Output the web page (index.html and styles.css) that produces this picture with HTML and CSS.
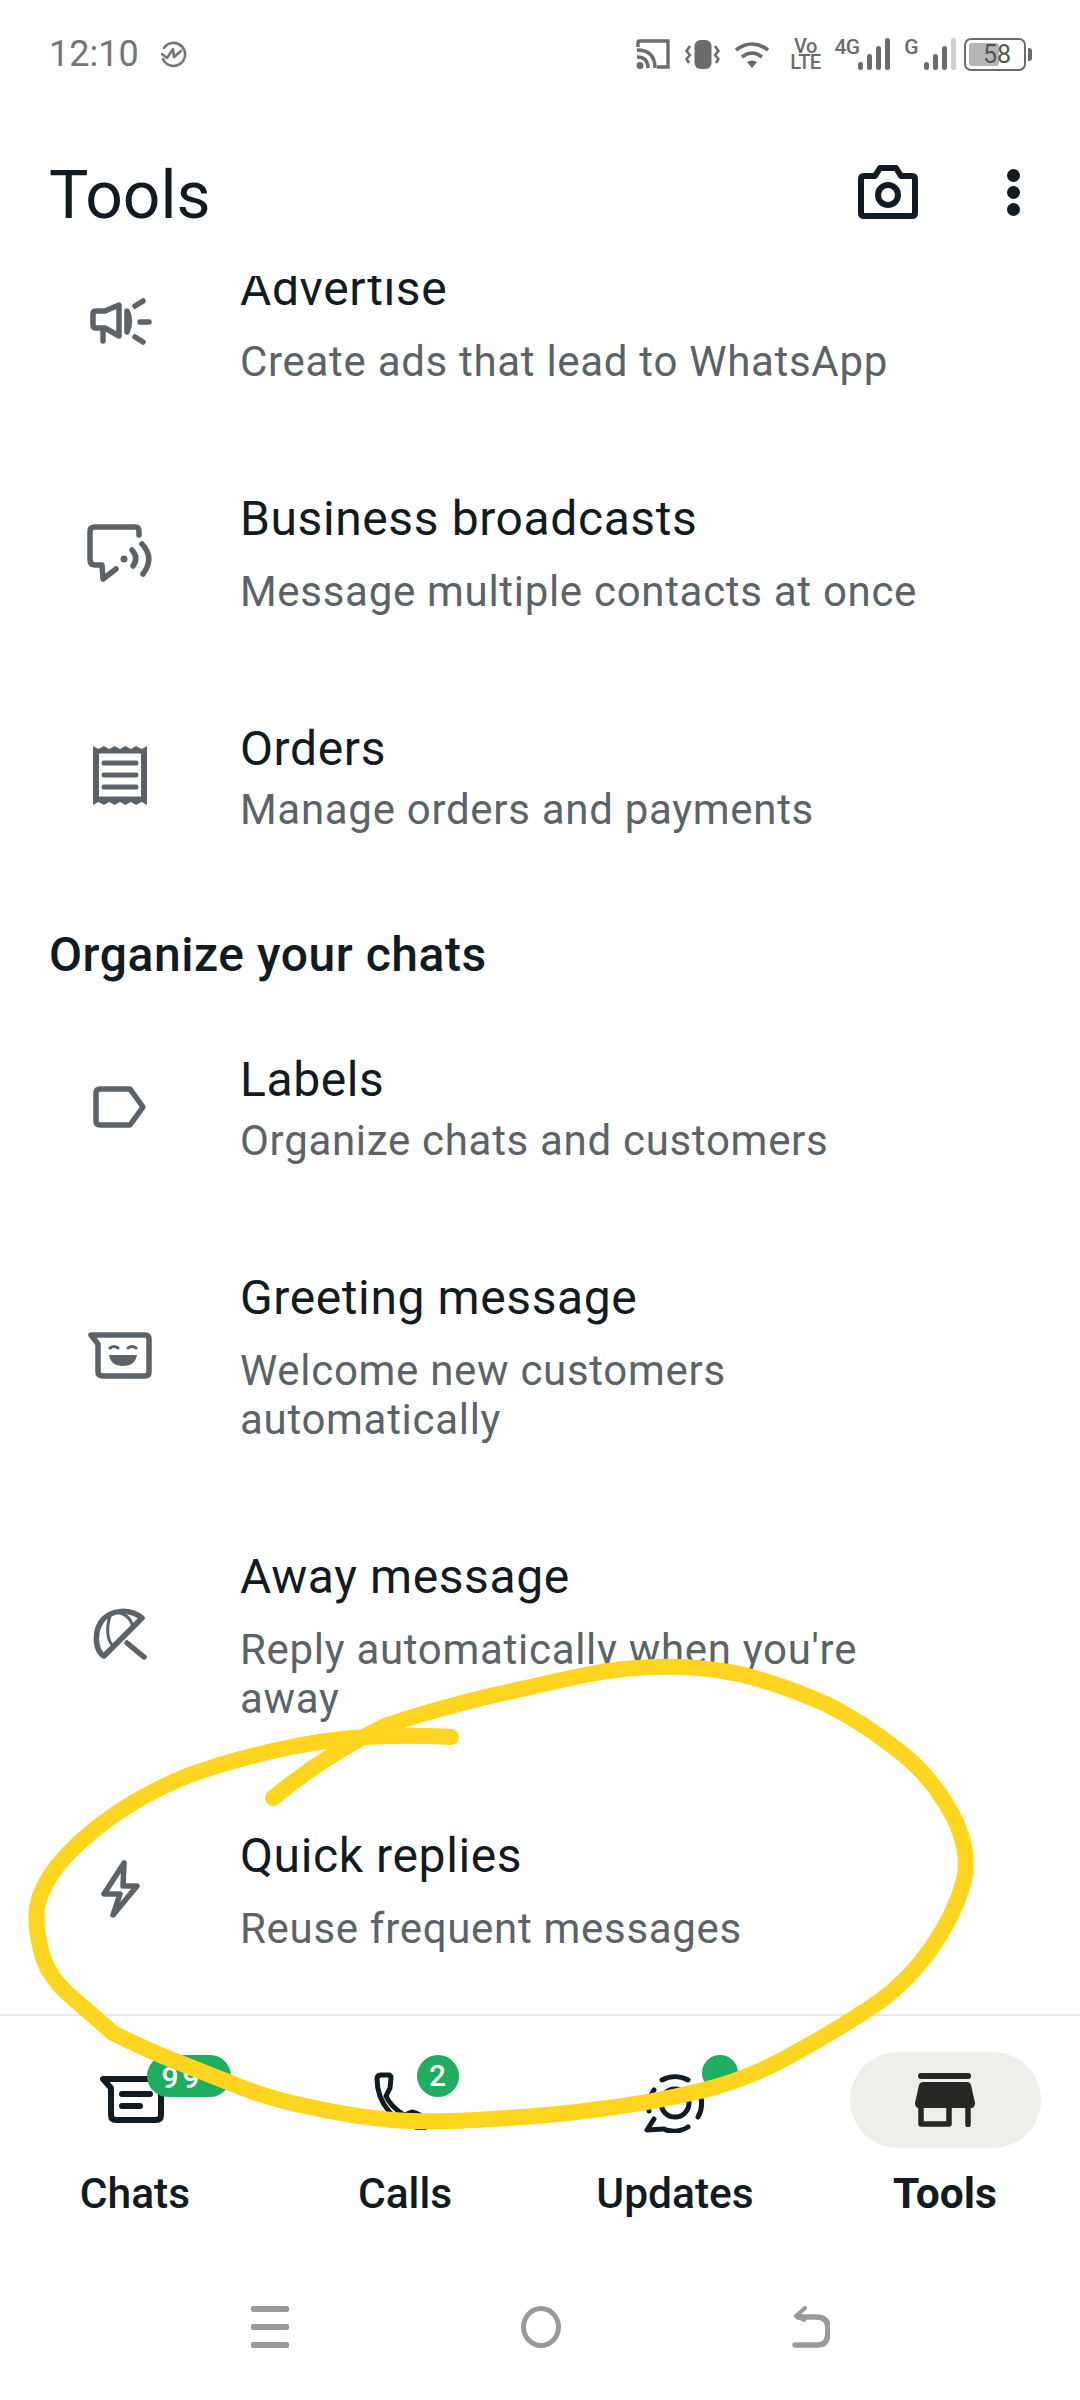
FILE: index.html
```html
<!DOCTYPE html>
<html lang="en">
<head>
    <meta charset="UTF-8">
    <meta name="viewport" content="width=device-width, initial-scale=1.0">
    <title>Tools</title>
    <link rel="stylesheet" href="styles.css">
</head>
<body>
    <div class="status-bar">
        <span class="clock">12:10</span>
        <svg class="alarm" width="28" height="28" viewBox="0 0 28 28" fill="none" stroke="#757575" stroke-width="2.6" stroke-linecap="round" stroke-linejoin="round"><path d="M5 8A11.5 11.5 0 1 1 4 19"/><path d="M3 14l5 4 6-9 1 8 7-6"/></svg>
        <div class="status-icons">
            <svg width="34" height="30" viewBox="0 0 34 30" fill="none" stroke="#6b6b6b" stroke-width="3.4"><path d="M2 8V3.5Q2 2 3.5 2H32V28H21"/><path d="M1 11Q19 11 19 29"/><path d="M1 18Q12 18 12 29"/><circle cx="4" cy="26.500" r="3.500" fill="#6b6b6b" stroke="none"/></svg>
            <svg width="35" height="29" viewBox="0 0 35 29" fill="none" stroke="#6b6b6b" stroke-width="2.600" stroke-linejoin="round"><rect x="9.500" y="0" width="17" height="29" rx="6" fill="#6b6b6b" stroke="none"/><path d="M5 6L1.500 11L5 15L1.500 19L4 23"/><path d="M30 6L33.500 11L30 15L33.500 19L31 23"/></svg>
            <svg width="36" height="27" viewBox="0 0 36 27" fill="none" stroke="#6b6b6b" stroke-width="3.600"><path d="M2 9Q18 -3 34 9"/><path d="M8 16Q18 8 28 16"/><path d="M13 21Q18 18 23 21L18 27Z" fill="#6b6b6b" stroke="none"/></svg>
            <div class="volte"><span>Vo</span><span>LTE</span></div>
            <div class="signal signal-4g">
                <span class="net">4G</span>
                <svg width="32" height="32" viewBox="0 0 32 32" fill="#6b6b6b"><rect x="0" y="24" width="5" height="8" rx="2.500"/><rect x="9" y="16" width="5" height="16" rx="2.500"/><rect x="18" y="8" width="5" height="24" rx="2.500"/><rect x="27" y="0" width="5" height="32" rx="2.500"/></svg>
            </div>
            <div class="signal">
                <span class="net">G</span>
                <svg width="32" height="32" viewBox="0 0 32 32" fill="#6b6b6b"><rect x="0" y="24" width="5" height="8" rx="2.500"/><rect x="9" y="16" width="5" height="16" rx="2.500"/><rect x="18" y="8" width="5" height="24" rx="2.500"/><rect x="27" y="0" width="5" height="32" rx="2.500" fill="#cfcfcf"/></svg>
            </div>
            <div class="battery">
                <div class="battery-body">
                    <span class="battery-fill"></span>
                    <span class="battery-level">58</span>
                </div>
                <span class="battery-tip"></span>
            </div>
        </div>
    </div>

    <header class="app-header">
        <h1>Tools</h1>
        <svg class="camera" width="60" height="54" viewBox="0 0 60 54" fill="none" stroke="#111b21" stroke-width="6" stroke-linejoin="round"><path d="M6 11H17L22 3H38L43 11H54Q57 11 57 14V48Q57 51 54 51H6Q3 51 3 48V14Q3 11 6 11Z"/><circle cx="30" cy="30" r="10"/></svg>
        <div class="kebab"><span></span><span></span><span></span></div>
    </header>

    <main class="tool-list">
        <div class="tool-row first">
            <div class="tool-icon">
                <svg width="64" height="64" viewBox="0 0 64 64" fill="none" stroke="#5b6368" stroke-width="5.500" stroke-linecap="round" stroke-linejoin="round"><path d="M8 21H17L31 15V46L17 38H8Q5 38 5 35V24Q5 21 8 21Z"/><path d="M15 39V51"/><path d="M39 21Q44 31 39 42Z" fill="#5b6368"/><path d="M47 16L55 11"/><path d="M52 32H61"/><path d="M47 47L55 52"/></svg>
            </div>
            <div class="tool-text">
                <div class="tool-name">Advertise</div>
                <div class="tool-desc">Create ads that lead to WhatsApp</div>
            </div>
        </div>
        <div class="tool-row">
            <div class="tool-icon">
                <svg width="68" height="64" viewBox="0 0 68 64" fill="none" stroke="#5b6368" stroke-width="5.500" stroke-linecap="round" stroke-linejoin="round"><path d="M53 15V11Q53 7 49 7H9Q4 7 4 11V40Q4 45 9 45H16L17 59L30 49"/><circle cx="38" cy="39" r="3.500" fill="#5b6368" stroke="none"/><path d="M46 30Q53 38 47 46"/><path d="M56 24Q69 38 57 54"/></svg>
            </div>
            <div class="tool-text">
                <div class="tool-name">Business broadcasts</div>
                <div class="tool-desc">Message multiple contacts at once</div>
            </div>
        </div>
        <div class="tool-row tight">
            <div class="tool-icon">
                <svg width="54" height="59" viewBox="0 0 54 59"><path fill="#5b6368" d="M0 0L5.400 3L10.800 0L16.200 3L21.600 0L27 3L32.400 0L37.800 3L43.200 0L48.600 3L54 0V59L48.600 56L43.200 59L37.800 56L32.400 59L27 56L21.600 59L16.200 56L10.800 59L5.400 56L0 59Z"/><rect x="6" y="7.500" width="42" height="43" fill="#fff"/><path d="M11 17H43M11 29H43M11 41H43" stroke="#5b6368" stroke-width="5" stroke-linecap="round"/></svg>
            </div>
            <div class="tool-text">
                <div class="tool-name">Orders</div>
                <div class="tool-desc">Manage orders and payments</div>
            </div>
        </div>

        <h2 class="section-title">Organize your chats</h2>

        <div class="tool-row tight after-title">
            <div class="tool-icon">
                <svg width="54" height="42" viewBox="0 0 54 42" fill="none" stroke="#5b6368" stroke-width="5.500" stroke-linejoin="round"><path d="M7 3H37L50 21L37 39H7Q3 39 3 35V7Q3 3 7 3Z"/></svg>
            </div>
            <div class="tool-text">
                <div class="tool-name">Labels</div>
                <div class="tool-desc">Organize chats and customers</div>
            </div>
        </div>
        <div class="tool-row">
            <div class="tool-icon">
                <svg width="64" height="47" viewBox="0 0 64 47"><path fill="none" stroke="#5b6368" stroke-width="5.500" stroke-linejoin="round" d="M3 3H57Q61 3 61 7V40Q61 44 57 44H15Q10 44 10 40V12Z"/><path fill="none" stroke="#5b6368" stroke-width="3" stroke-linecap="round" d="M22 16Q26 13 30 16M40 16Q44 13 48 16"/><path fill="#5b6368" d="M21 23H49Q47 34 35 34Q23 34 21 23Z"/></svg>
            </div>
            <div class="tool-text">
                <div class="tool-name">Greeting message</div>
                <div class="tool-desc">Welcome new customers automatically</div>
            </div>
        </div>
        <div class="tool-row">
            <div class="tool-icon">
                <svg width="54" height="54" viewBox="0 0 54 54" fill="none" stroke="#5b6368" stroke-width="5.500" stroke-linecap="round" stroke-linejoin="round"><path d="M49 11C38 2 18 1 8 15C1 26 2 44 11 49Z"/><path d="M17 9C13 22 14 34 21 40" stroke-width="3"/><path d="M22 5C32 6 38 12 40 20" stroke-width="3"/><path d="M34 36L51 50"/></svg>
            </div>
            <div class="tool-text">
                <div class="tool-name">Away message</div>
                <div class="tool-desc">Reply automatically when you're away</div>
            </div>
        </div>
        <div class="tool-row">
            <div class="tool-icon">
                <svg width="41" height="60" viewBox="0 0 41 60" fill="none" stroke="#5b6368" stroke-width="5.500" stroke-linejoin="round"><path d="M24 4L4 35H20L13 56L37 27H23Z"/></svg>
            </div>
            <div class="tool-text">
                <div class="tool-name">Quick replies</div>
                <div class="tool-desc">Reuse frequent messages</div>
            </div>
        </div>
    </main>

    <nav class="tab-bar">
        <div class="tab">
            <div class="tab-pill">
                <svg class="tab-icon-chats" width="64" height="48" viewBox="0 0 64 48" fill="none" stroke="#111b21" stroke-width="6" stroke-linejoin="round" stroke-linecap="round"><path d="M3 3H61V39Q61 44 56 44H16Q11 44 11 39V12Z"/><path d="M22 18H50M22 30H40"/></svg>
                <span class="badge badge-wide">99<span class="badge-plus">+</span></span>
            </div>
            <span class="tab-label">Chats</span>
        </div>
        <div class="tab">
            <div class="tab-pill">
                <svg class="tab-icon-calls" width="60" height="60" viewBox="0 0 60 60" fill="none" stroke="#111b21" stroke-width="5" stroke-linejoin="round"><path d="M9 5H16Q19 5 19 8L18 18L14 26C17 33 24 40 32 45L40 42Q48 44 55 50V54Q55 58 50 58C22 56 5 32 5 9Q5 5 9 5Z"/></svg>
                <span class="badge">2</span>
            </div>
            <span class="tab-label">Calls</span>
        </div>
        <div class="tab">
            <div class="tab-pill">
                <svg class="tab-icon-updates" width="62" height="60" viewBox="0 0 62 60" fill="none" stroke="#111b21" stroke-width="5" stroke-linecap="round" stroke-linejoin="round"><path d="M18 7A27 27 0 0 1 44 7"/><path d="M5 38A27 27 0 0 1 10 17"/><path d="M54 17A27 27 0 0 1 54 44"/><path d="M22 57A27 27 0 0 0 44 54"/><path d="M10 46L3 57L20 56"/><circle cx="31" cy="30" r="14"/></svg>
                <span class="badge badge-dot"></span>
            </div>
            <span class="tab-label">Updates</span>
        </div>
        <div class="tab active">
            <div class="tab-pill">
                <svg width="60" height="54" viewBox="0 0 60 54"><rect x="3" y="0" width="53" height="6" rx="3" fill="#262624"/><path fill="#262624" d="M8 9H52Q55 9 56 12L60 30Q60 35 56 35H4Q0 35 0 30L4 12Q5 9 8 9Z"/><path fill="none" stroke="#262624" stroke-width="5.500" stroke-linejoin="round" d="M6 35V51H34V35"/><path fill="none" stroke="#262624" stroke-width="5.500" stroke-linecap="round" d="M53 35V51.500"/></svg>
            </div>
            <span class="tab-label">Tools</span>
        </div>
    </nav>

    <div class="system-nav">
        <div class="sys-menu"><span></span><span></span><span></span></div>
        <span class="sys-home"></span>
        <svg width="38" height="42" viewBox="0 0 38 42" fill="none" stroke="#999" stroke-width="5.500" stroke-linecap="round" stroke-linejoin="round"><path d="M3 39H26Q36 39 36 26V22Q36 11 24 11H6"/><path d="M13 2L4 10L12 14" stroke-width="4"/></svg>
    </div>

    <svg class="scribble" width="1080" height="2400" viewBox="0 0 1080 2400" fill="none">
        <path stroke="#ffd51f" stroke-width="16" stroke-linecap="round" stroke-linejoin="round" d="M451 1737Q365 1732 296 1746Q227 1760 182 1778Q138 1797 107 1820Q76 1843 58 1865Q41 1887 37 1907Q35 1927 41 1950Q46 1973 67 1993Q90 2013 113 2033Q140 2047 170 2059Q205 2073 238 2086Q270 2099 310 2107Q350 2116 392 2120Q433 2123 492 2119Q550 2116 600 2109Q650 2103 700 2091Q750 2079 795 2053Q835 2031 870 2008Q905 1985 930 1950Q955 1915 964 1880Q972 1845 945 1802Q925 1770 895 1748Q862 1722 826 1704Q785 1686 744 1675Q700 1665 654 1667Q620 1668 585 1675Q533 1686 482 1698Q425 1712 385 1726Q325 1755 273 1798"/>
    </svg>
</body>
</html>
```

FILE: styles.css
```css
html, body {
    margin: 0;
    padding: 0;
}

body {
    position: relative;
    display: flex;
    flex-direction: column;
    width: 1080px;
    height: 2400px;
    overflow: hidden;
    background-color: #fff;
    color: #111b21;
    font-family: Roboto, "Noto Sans", sans-serif;
}

/* status bar */
.status-bar {
    display: flex;
    align-items: center;
    height: 108px;
    padding: 0 48px 0 49px;
    box-sizing: border-box;
    color: #6b6b6b;
}

.clock {
    font-size: 36px;
    color: #757575;
}

.alarm {
    margin-left: 20px;
}

.status-icons {
    display: flex;
    align-items: center;
    gap: 14.500px;
    margin-left: auto;
}

.volte {
    display: flex;
    flex-direction: column;
    align-items: center;
    width: 29px;
    margin-left: 6px;
    font-size: 20px;
    font-weight: 500;
    line-height: 16px;
    letter-spacing: -0.5px;
}

.signal {
    display: flex;
    align-items: flex-start;
}

.net {
    margin-right: 5px;
    font-size: 21px;
    font-weight: 500;
    line-height: 18px;
}

.signal-4g .net {
    margin-right: -2px;
    letter-spacing: -0.5px;
}

.battery {
    display: flex;
    align-items: center;
    gap: 2px;
    margin-left: -6px;
}

.battery-body {
    position: relative;
    display: flex;
    align-items: center;
    justify-content: center;
    width: 62px;
    height: 33px;
    box-sizing: border-box;
    border: 2.500px solid #6b6b6b;
    border-radius: 7px;
}

.battery-fill {
    position: absolute;
    top: 3px;
    bottom: 3px;
    left: 3px;
    width: 30px;
    border-radius: 3px;
    background-color: #b5b5b5;
}

.battery-level {
    position: relative;
    left: 2px;
    font-size: 25px;
    color: #555;
}

.battery-tip {
    width: 4px;
    height: 13px;
    border-radius: 0 3px 3px 0;
    background-color: #6b6b6b;
}

/* app header */
.app-header {
    display: flex;
    align-items: center;
    height: 168px;
    padding: 0 60px 0 49px;
    box-sizing: border-box;
}

.app-header h1 {
    margin: 6px 0 0;
    font-size: 66px;
    font-weight: 400;
}

.camera {
    margin-left: auto;
}

.kebab {
    display: flex;
    flex-direction: column;
    gap: 4px;
    margin-left: 89px;
}

.kebab span {
    width: 13px;
    height: 13px;
    border-radius: 50%;
    background-color: #111b21;
}

/* list */
.tool-list {
    flex: 1;
    min-height: 0;
    overflow: hidden;
}

.tool-row {
    display: flex;
    align-items: center;
    margin-top: 105px;
}

.tool-row.first {
    margin-top: -15px;
}

.tool-row.after-title {
    margin-top: 67px;
}

.tool-icon {
    display: flex;
    justify-content: center;
    flex: none;
    width: 240px;
    padding-bottom: 4px;
}

.tool-text {
    width: 690px;
}

.tool-name {
    font-size: 48px;
    line-height: 56px;
    letter-spacing: 0.6px;
}

.tool-desc {
    margin-top: 20px;
    font-size: 42px;
    line-height: 49px;
    letter-spacing: 0.7px;
    color: #5b6368;
}

.tight .tool-desc {
    margin-top: 8px;
}

.section-title {
    margin: 91px 0 0 49px;
    font-size: 48px;
    font-weight: 500;
    line-height: 60px;
    letter-spacing: 0.55px;
}

/* bottom tabs */
.tab-bar {
    display: grid;
    grid-template-columns: repeat(4, 1fr);
    height: 236px;
    box-sizing: border-box;
    border-top: 2px solid #e9e9e9;
}

.tab {
    display: flex;
    flex-direction: column;
    align-items: center;
    padding-top: 36px;
}

.tab-pill {
    position: relative;
    display: flex;
    align-items: center;
    justify-content: center;
    width: 191px;
    height: 96px;
    border-radius: 48px;
}

.active .tab-pill {
    background-color: #f0eeeb;
}

.tab-label {
    margin-top: 21px;
    font-size: 42.500px;
    font-weight: 500;
    line-height: 50px;
}

.active .tab-label {
    font-weight: 700;
}

.tab-icon-chats {
    margin: 0 6px 0 0;
}

.tab-icon-calls {
    margin: 0 6px 0 0;
}

.tab-icon-updates {
    margin-top: 6px;
}

.badge {
    position: absolute;
    top: 3px;
    left: 107px;
    width: 42px;
    height: 42px;
    border-radius: 21px;
    background-color: #1fad60;
    color: #fff;
    font-size: 30px;
    font-weight: 500;
    line-height: 42px;
    text-align: center;
}

.badge-wide {
    width: 84px;
    padding-left: 15px;
    box-sizing: border-box;
    letter-spacing: 4px;
    text-align: left;
}

.badge-plus {
    font-size: 20px;
    vertical-align: 5px;
}

.badge-dot {
    left: 122px;
    width: 36px;
    height: 36px;
}

/* android nav */
.system-nav {
    display: flex;
    align-items: center;
    justify-content: space-between;
    height: 150px;
    padding: 4px 250px 0 251px;
    box-sizing: border-box;
}

.sys-menu {
    display: flex;
    flex-direction: column;
    gap: 12px;
}

.sys-menu span {
    width: 38px;
    height: 6px;
    border-radius: 2px;
    background-color: #999;
}

.sys-home {
    width: 40px;
    height: 42px;
    box-sizing: border-box;
    border: 5.500px solid #999;
    border-radius: 50%;
}

/* marker scribble drawn over the screenshot */
.scribble {
    position: absolute;
    top: 0;
    left: 0;
    pointer-events: none;
}
```
